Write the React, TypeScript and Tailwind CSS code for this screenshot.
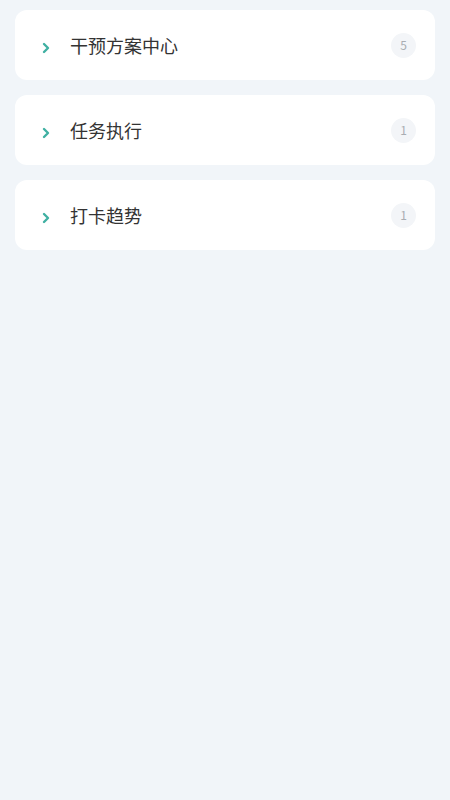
const items = [
  { title: "干预方案中心", count: 5 },
  { title: "任务执行", count: 1 },
  { title: "打卡趋势", count: 1 },
]

const Chevron = () => (
  <svg width="10" height="12" viewBox="0 0 10 12" fill="none">
    <path d="M3 2l4 4-4 4" stroke="#3fb0a2" strokeWidth="2.4" strokeLinecap="round" strokeLinejoin="round" />
  </svg>
)

const App = () => {
  return (
    <div className="min-h-[800px] w-full bg-[#f1f5f9] px-[15px] pt-[10px] font-['Noto_Sans_CJK_SC','Noto_Sans',sans-serif]">
      <div className="flex flex-col gap-[15px]">
        {items.map((item) => (
          <div key={item.title} className="flex h-[70px] items-center rounded-[12px] bg-white pl-[26px] pr-[19px]">
            <div className="mt-[5px] flex w-[10px] justify-center">
              <Chevron />
            </div>
            <p className="ml-[19px] grow text-[18px] text-[#333]">{item.title}</p>
            <div className="flex h-[25px] w-[25px] items-center justify-center rounded-full bg-[#f3f5f8] text-[12px] text-[#a9adb2]">
              {item.count}
            </div>
          </div>
        ))}
      </div>
    </div>
  )
}

export default App
